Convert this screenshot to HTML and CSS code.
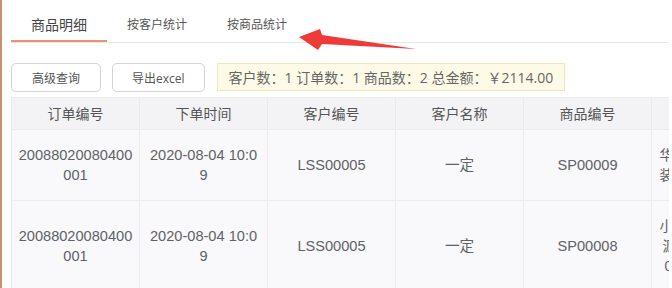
FILE: index.html
```html
<!DOCTYPE html>
<html lang="zh-CN">
<head>
    <meta charset="UTF-8">
    <title>商品明细</title>
    <link rel="stylesheet" href="styles.css">
</head>
<body>
<div class="page">

    <div class="tabs">
        <div class="tab active">商品明细</div>
        <div class="tab">按客户统计</div>
        <div class="tab">按商品统计</div>
    </div>

    <div class="toolbar">
        <button class="btn">高级查询</button>
        <button class="btn">导出excel</button>
        <div class="summary">客户数：1 订单数：1 商品数：2 总金额：￥2114.00</div>
    </div>

    <div class="table-wrap">
        <table class="grid">
            <colgroup>
                <col><col><col><col><col><col>
            </colgroup>
            <thead>
                <tr>
                    <th>订单编号</th>
                    <th>下单时间</th>
                    <th>客户编号</th>
                    <th>客户名称</th>
                    <th>商品编号</th>
                    <th>商品名称</th>
                </tr>
            </thead>
            <tbody>
                <tr>
                    <td>20088020080400001</td>
                    <td>2020-08-04 10:09</td>
                    <td>LSS00005</td>
                    <td>一定</td>
                    <td>SP00009</td>
                    <td class="name">华为手机礼品盒套装黑色限量版本款</td>
                </tr>
                <tr>
                    <td>20088020080400001</td>
                    <td>2020-08-04 10:09</td>
                    <td>LSS00005</td>
                    <td>一定</td>
                    <td>SP00008</td>
                    <td class="name">小米充电宝移动电源快充大容量版2 0000mAh白色款</td>
                </tr>
            </tbody>
        </table>
    </div>

    <!-- annotation arrow pointing at the third tab -->
    <svg class="arrow" width="130" height="30" viewBox="295 25 130 30">
        <polygon points="299,37 320,29 322,35 416,49 322,44 318,50" fill="#ef3a3a"/>
    </svg>

</div>
</body>
</html>
```

FILE: styles.css
```css
html, body {
    margin: 0;
    padding: 0;
    background: #fff;
}

body {
    font-family: "Open Sans", "Noto Sans CJK SC", sans-serif;
    color: #606266;
    border-left: 2px solid #c9906e;
    height: 288px;
    overflow: hidden;
    box-sizing: border-box;
}

.page {
    position: relative;
    padding-left: 9px;
}

/* Tabs */
.tabs {
    display: flex;
    height: 42px;
    border-bottom: 1px solid #e6e6e6;
    margin-right: 4px;
}

.tab {
    padding: 0 20px;
    height: 42px;
    line-height: 50px;
    font-size: 12px;
    color: #555;
    box-sizing: border-box;
}

.tab.active {
    font-size: 14px;
    color: #444;
    line-height: 49px;
    border-bottom: 2px solid #e9946e;
}

/* Toolbar */
.toolbar {
    display: flex;
    align-items: flex-start;
    margin-top: 20px;
    height: 29px;
}

.btn {
    font-family: inherit;
    font-size: 12px;
    color: #555;
    background: #fff;
    border: 1px solid #d4d4d4;
    border-radius: 5px;
    height: 29px;
    padding: 0 20px;
    margin-right: 11px;
}

.btn + .btn {
    padding: 0 19px;
}

.summary {
    margin-left: 1px;
    height: 28px;
    line-height: 27px;
    box-sizing: border-box;
    padding: 0 11px;
    font-size: 14px;
    color: #666;
    background: #fdfbe7;
    border: 1px solid #efe7b8;
}

/* Table */
.table-wrap {
    margin-top: 5px;
    width: 658px;
    overflow: hidden;
}

.grid {
    border-collapse: collapse;
    table-layout: fixed;
    width: 768px;
    font-family: "Liberation Sans", "Noto Sans CJK SC", sans-serif;
    font-size: 14.6px;
}

.grid col {
    width: 128px;
}

.grid th,
.grid td {
    padding: 15px 6.25px;
    border: 1px solid #ebebeb;
    text-align: center;
    word-break: break-all;
    line-height: 20px;
    font-weight: normal;
    color: #606266;
}

.grid th {
    padding-top: 6px;
    padding-bottom: 5px;
    font-size: 14px;
    background: #f3f3f5;
    color: #555;
}

.grid td {
    background: #f9f9fb;
}

.grid td.name {
    font-size: 14px;
}

.arrow {
    position: absolute;
    left: 293px;
    top: 25px;
}
```
